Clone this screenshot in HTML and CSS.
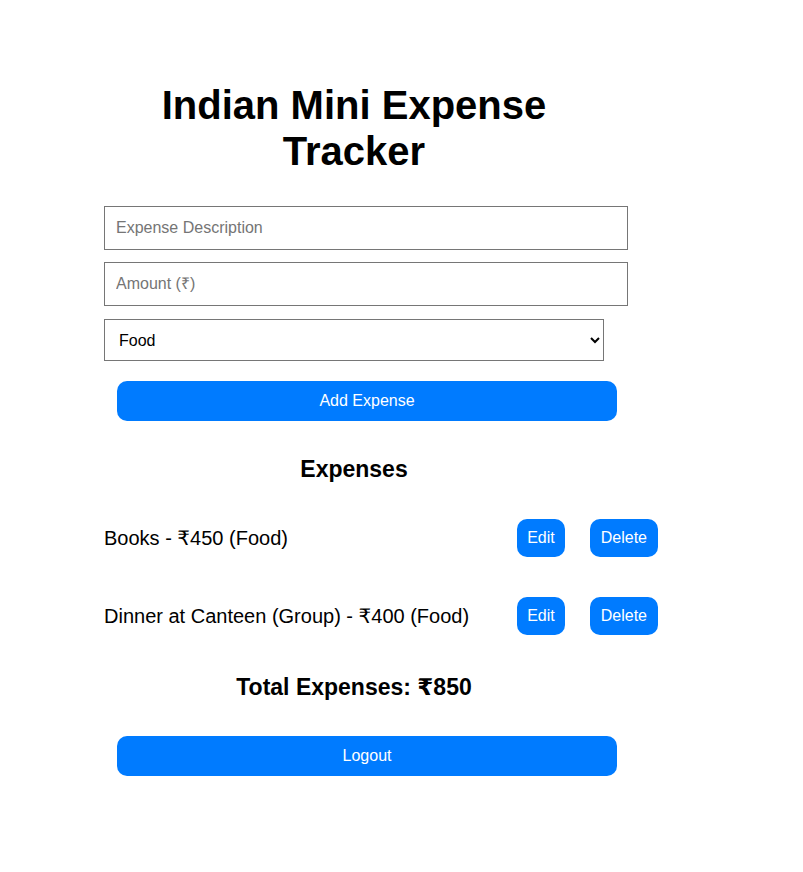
FILE: index.html
```html
<!DOCTYPE html>
<html lang="en">
<head>
<meta charset="utf-8">
<title>Indian Mini Expense Tracker</title>
<link rel="stylesheet" href="styles.css">
</head>
<body>
<div class="app">
  <h1 class="title">Indian Mini Expense Tracker</h1>
  <form class="form">
    <input class="field field-desc" type="text" placeholder="Expense Description">
    <input class="field field-amount" type="number" placeholder="Amount (₹)">
    <select class="category">
      <option>Food</option>
      <option>Travel</option>
      <option>Shopping</option>
      <option>Other</option>
    </select>
    <button class="btn btn-wide" type="button">Add Expense</button>
  </form>
  <h2 class="section-title">Expenses</h2>
  <ul class="list">
    <li class="row">
      <span class="row-text">Books - ₹450 (Food)</span>
      <div class="row-actions">
        <button class="btn btn-small" type="button">Edit</button>
        <button class="btn btn-small btn-delete" type="button">Delete</button>
      </div>
    </li>
    <li class="row">
      <span class="row-text">Dinner at Canteen (Group) - ₹400 (Food)</span>
      <div class="row-actions">
        <button class="btn btn-small" type="button">Edit</button>
        <button class="btn btn-small btn-delete" type="button">Delete</button>
      </div>
    </li>
  </ul>
  <h2 class="total">Total Expenses: ₹850</h2>
  <button class="btn btn-wide btn-logout" type="button">Logout</button>
</div>
</body>
</html>
```

FILE: styles.css
```css
html, body {
  margin: 0;
  padding: 0;
  background: #ffffff;
}

body {
  font-family: "Liberation Sans", Arial, "DejaVu Sans", sans-serif;
  color: #000000;
}

.app {
  width: 500px;
  padding: 82px 0 0 104px;
}

.title {
  margin: 0;
  font-size: 40px;
  line-height: 46px;
  font-weight: bold;
  text-align: center;
}

.form {
  margin: 32px 0 0 0;
  display: flex;
  flex-direction: column;
  align-items: flex-start;
}

.field {
  box-sizing: border-box;
  width: 524px;
  height: 44px;
  padding: 0 11px;
  border: 1px solid #767676;
  border-radius: 0;
  font-family: "Liberation Sans", Arial, sans-serif;
  font-size: 16px;
  color: #000;
  outline: none;
  -moz-appearance: textfield;
}

.field::-webkit-outer-spin-button,
.field::-webkit-inner-spin-button {
  -webkit-appearance: none;
  margin: 0;
}

.field::placeholder {
  color: #757575;
}

.field-desc {
  margin-bottom: 12px;
}

.field-amount {
  margin-bottom: 13px;
}

.category {
  box-sizing: border-box;
  width: 500px;
  height: 42px;
  padding: 0 10px;
  border: 1px solid #767676;
  border-radius: 0;
  background: #ffffff;
  font-family: "Liberation Sans", Arial, sans-serif;
  font-size: 16px;
  color: #000;
  margin-bottom: 20px;
}

.btn {
  border: none;
  background: #007bff;
  color: #ffffff;
  font-family: "Liberation Sans", Arial, sans-serif;
  font-size: 16px;
  cursor: pointer;
}

.btn-wide {
  box-sizing: border-box;
  width: 500px;
  height: 40px;
  margin-left: 13px;
  border-radius: 10px;
  padding: 0;
}

.section-title {
  margin: 34px 0 0 0;
  font-size: 23px;
  line-height: 28px;
  font-weight: bold;
  text-align: center;
}

.list {
  list-style: none;
  margin: 36px 0 0 0;
  padding: 0;
  width: 554px;
  display: flex;
  flex-direction: column;
  gap: 40px;
}

.row {
  display: flex;
  align-items: center;
  height: 38px;
}

.row-text {
  flex: 1;
  font-size: 20px;
  line-height: 23px;
}

.row-actions {
  display: flex;
  gap: 25px;
}

.btn-small {
  height: 38px;
  padding: 0 10px;
  border-radius: 10px;
}

.btn-delete {
  padding: 0 11px;
}

.total {
  margin: 38px 0 0 0;
  font-size: 23px;
  line-height: 28px;
  font-weight: bold;
  text-align: center;
}

.btn-logout {
  display: block;
  margin-top: 35px;
}
```
